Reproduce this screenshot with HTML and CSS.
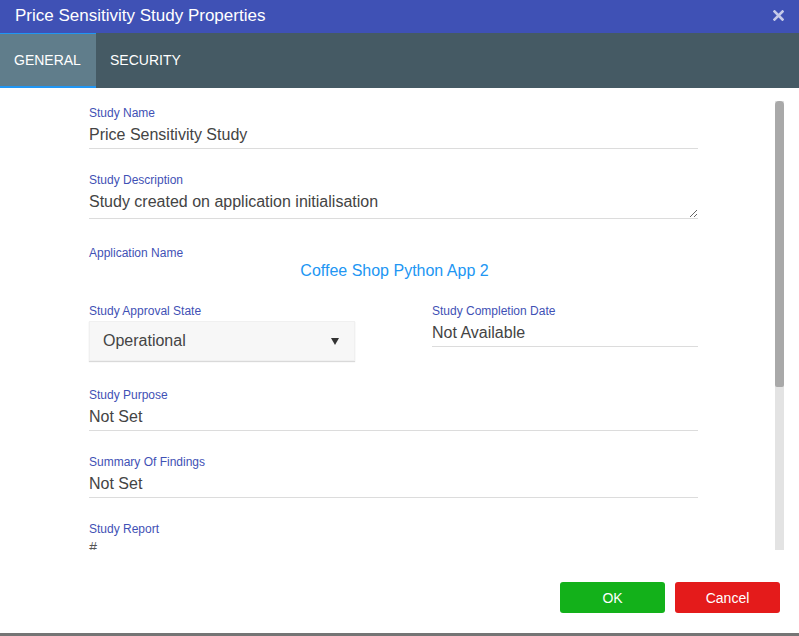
FILE: index.html
```html
<!DOCTYPE html>
<html>
<head>
<meta charset="utf-8">
<link rel="stylesheet" href="styles.css">
</head>
<body>
<div class="dialog">
  <div class="titlebar">
    <span class="title">Price Sensitivity Study Properties</span>
    <span class="close"><svg width="11" height="11" viewBox="0 0 11 11"><path d="M1.5 1.5L9.5 9.5M9.5 1.5L1.5 9.5" stroke="#c5cae9" stroke-width="2.6" stroke-linecap="square"/></svg></span>
  </div>
  <div class="tabs">
    <div class="tab active">GENERAL</div>
    <div class="tab">SECURITY</div>
  </div>
  <div class="body">
    <div class="scroll">
      <div class="content">
        <div class="field">
          <div class="label">Study Name</div>
          <div class="value line">Price Sensitivity Study</div>
        </div>
        <div class="field desc">
          <div class="label">Study Description</div>
          <textarea class="textarea" rows="1">Study created on application initialisation</textarea>
        </div>
        <div class="field app">
          <div class="label">Application Name</div>
          <div class="value link">Coffee Shop Python App 2</div>
        </div>
        <div class="row">
          <div class="field">
            <div class="label">Study Approval State</div>
            <div class="select"><span>Operational</span><span class="arrow"></span></div>
          </div>
          <div class="field">
            <div class="label">Study Completion Date</div>
            <div class="value line">Not Available</div>
          </div>
        </div>
        <div class="field">
          <div class="label">Study Purpose</div>
          <div class="value line">Not Set</div>
        </div>
        <div class="field">
          <div class="label">Summary Of Findings</div>
          <div class="value line">Not Set</div>
        </div>
        <div class="field">
          <div class="label">Study Report</div>
          <div class="report">#</div>
        </div>
      </div>
    </div>
    <div class="scrollbar"><div class="thumb"></div></div>
  </div>
  <div class="footer">
    <button class="btn ok">OK</button>
    <button class="btn cancel">Cancel</button>
  </div>
</div>
</body>
</html>
```
FILE: styles.css
```css
* { box-sizing: border-box; }
html, body { margin: 0; padding: 0; background: #fff; }
body { font-family: "Liberation Sans", Arial, sans-serif; }

.dialog {
  width: 799px;
  height: 636px;
  display: flex;
  flex-direction: column;
  border-bottom: 3px solid #757575;
  overflow: hidden;
}

.titlebar {
  height: 33px;
  flex: none;
  background: #3f51b5;
  display: flex;
  align-items: center;
  justify-content: space-between;
  padding: 0 15px 2px 15px;
}
.title { color: #fff; font-size: 17px; }
.close { display: flex; margin-top: -1px; }

.tabs {
  height: 55px;
  flex: none;
  background: #455a64;
  display: flex;
}
.tab {
  color: #fff;
  font-size: 14px;
  padding: 0 14px;
  display: flex;
  align-items: center;
  border-top: 1px solid transparent;
  border-bottom: 2px solid transparent;
}
.tab.active {
  width: 96px;
  background: #607d8b;
  border-top-color: #2196f3;
  border-bottom-color: #2196f3;
}

.body {
  flex: none;
  height: 462px;
  padding-top: 13px;
  display: flex;
}
.scroll {
  width: 775px;
  height: 449px;
  overflow: hidden;
}
.scrollbar {
  width: 9px;
  height: 449px;
  background: #e3e3e3;
}
.thumb {
  height: 286px;
  background: #a9a9a9;
  border-radius: 4px 4px 2px 2px;
}

.content {
  padding: 5px 0 0 89px;
  width: 698px;
}

.field { margin-bottom: 24px; }
.label {
  color: #3f51b5;
  font-size: 12px;
  line-height: 14px;
  margin-bottom: 3px;
}
.value {
  color: #444;
  font-size: 16px;
  line-height: 22px;
}
.value.line {
  padding-top: 1px;
  padding-bottom: 2px;
  border-bottom: 1px solid #dcdcdc;
}
.value.link {
  color: #2196f3;
  text-align: center;
  margin-top: -3px;
  padding-left: 2px;
}

.desc { margin-bottom: 27px; }
.textarea {
  display: block;
  width: 100%;
  height: 29px;
  border: none;
  border-bottom: 1px solid #dcdcdc;
  font-family: "Liberation Sans", Arial, sans-serif;
  font-size: 16px;
  line-height: 22px;
  color: #444;
  padding: 1px 0 0 0;
  margin: 0;
  outline: none;
  resize: vertical;
  overflow: hidden;
}

.app { margin-bottom: 22px; }

.row {
  display: flex;
  justify-content: space-between;
  margin-bottom: 27px;
}
.row .field { width: 266px; margin-bottom: 0; }

.select {
  height: 40px;
  background: #f7f7f7;
  border: 1px solid #f0f0f0;
  box-shadow: 0 1px 1px rgba(0,0,0,0.15);
  display: flex;
  align-items: center;
  justify-content: space-between;
  padding: 0 15px 0 13px;
  font-size: 16px;
  color: #444;
}
.arrow {
  width: 0;
  height: 0;
  border-left: 4px solid transparent;
  border-right: 4px solid transparent;
  border-top: 7px solid #333;
  margin-top: 1px;
}

.report {
  color: #555;
  font-size: 14px;
  font-style: italic;
  line-height: 18px;
  margin-top: -1px;
}

.footer {
  flex: 1;
  display: flex;
  justify-content: flex-end;
  align-items: flex-start;
  gap: 10px;
  padding: 32px 19px 0 0;
}
.btn {
  width: 105px;
  height: 31px;
  border: none;
  border-radius: 3px;
  color: #fff;
  font-family: "Liberation Sans", Arial, sans-serif;
  font-size: 14px;
  cursor: pointer;
}
.ok { background: #13b11a; }
.cancel { background: #e41b1b; }
```
